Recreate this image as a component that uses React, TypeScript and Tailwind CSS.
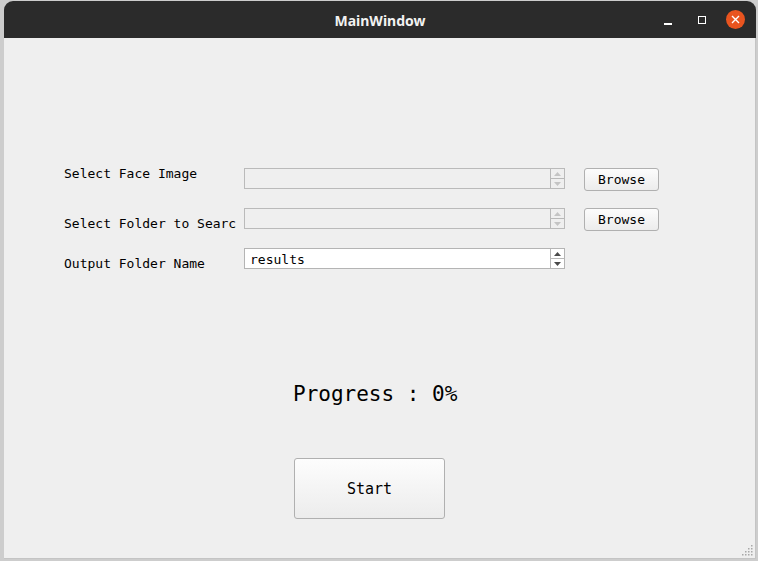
import React from 'react';

const mono = { fontFamily: '"DejaVu Sans Mono", "Liberation Mono", monospace' };

function SpinArrows({ disabled }: { disabled?: boolean }) {
  const fill = disabled ? '#c4c4c4' : '#4a4a4a';
  return (
    <div className="flex flex-col w-[14px] h-full border-l border-[#b8b8b8]">
      <div className="flex-1 flex items-center justify-center border-b border-[#b8b8b8]">
        <svg width="7" height="4" viewBox="0 0 7 4">
          <path d="M0 4 L3.5 0 L7 4 Z" fill={fill} />
        </svg>
      </div>
      <div className="flex-1 flex items-center justify-center">
        <svg width="7" height="4" viewBox="0 0 7 4">
          <path d="M0 0 L3.5 4 L7 0 Z" fill={fill} />
        </svg>
      </div>
    </div>
  );
}

function Field({ value, disabled }: { value?: string; disabled?: boolean }) {
  return (
    <div
      className={`flex w-[321px] h-[21px] border ${
        disabled ? 'bg-[#efefef] border-[#bababa]' : 'bg-white border-[#b4b4b4]'
      }`}
    >
      <div className="flex-1 pl-[5px] pt-[1px] text-[13px] leading-[19px] text-black" style={mono}>
        {value}
      </div>
      <SpinArrows disabled={disabled} />
    </div>
  );
}

function BrowseButton() {
  return (
    <button
      className="block w-[75px] h-[23px] rounded-[3px] border border-[#b0b0b0] bg-gradient-to-b from-[#fcfcfc] to-[#ececec] text-[13px] leading-[21px] text-black"
      style={mono}
    >
      Browse
    </button>
  );
}

export default function App() {
  const rows = [
    { label: 'Select Face Image', labelTop: 'mt-[-2px]', disabled: true, browse: true, value: '' },
    { label: 'Select Folder to Searc', labelTop: 'mt-[8px]', disabled: true, browse: true, value: '' },
    { label: 'Output Folder Name', labelTop: 'mt-[8px]', disabled: false, browse: false, value: 'results' },
  ];

  return (
    <div className="w-[758px] h-[561px] bg-[#cdcdcd] pt-[1px] pl-[4px] overflow-hidden">
      <div className="w-[752px] h-[558px] flex flex-col rounded-t-[9px] overflow-hidden">
        {/* title bar */}
        <div className="relative h-[37px] bg-[#2b2b2b] flex items-center justify-center shrink-0">
          <span
            className="text-[14px] font-bold text-[#f2f2f2] mt-[1px]"
            style={{ fontFamily: '"Noto Sans", "DejaVu Sans", sans-serif' }}
          >
            MainWindow
          </span>
          <div className="absolute right-[11px] top-[9px] flex items-center">
            <div className="w-[8px] h-[10px] flex items-end">
              <div className="w-[8px] h-[1.5px] bg-white" />
            </div>
            <div className="ml-[26px] w-[8px] h-[8px] border border-white" />
            <div className="ml-[20px] w-[19px] h-[19px] rounded-full bg-[#e9541f] flex items-center justify-center">
              <svg width="9" height="9" viewBox="0 0 9 9">
                <path d="M1 1 L8 8 M8 1 L1 8" stroke="white" strokeWidth="1.4" />
              </svg>
            </div>
          </div>
        </div>

        {/* content */}
        <div className="relative flex-1 bg-[#efefef] pt-[130px] pl-[60px] border-r border-b border-[#c4c4c4]">
          <div className="flex flex-col">
            {rows.map(r => (
              <div key={r.label} className="flex items-start h-[40px]">
                <div
                  className={`w-[180px] text-[13px] leading-[15px] text-black whitespace-nowrap ${r.labelTop}`}
                  style={mono}
                >
                  {r.label}
                </div>
                <Field value={r.value} disabled={r.disabled} />
                {r.browse && (
                  <div className="ml-[19px]">
                    <BrowseButton />
                  </div>
                )}
              </div>
            ))}
          </div>

          <div
            className="ml-[229px] mt-[94px] h-[25px] text-[21px] leading-[25px] text-black whitespace-nowrap"
            style={mono}
          >
            Progress : 0%
          </div>

          <button
            className="block ml-[230px] mt-[51px] w-[151px] h-[61px] rounded-[3px] border border-[#b0b0b0] bg-gradient-to-b from-[#fdfdfd] to-[#ececec] text-[15px] leading-[59px] pt-[1px] text-black"
            style={mono}
          >
            Start
          </button>

          {/* resize grip */}
          <svg className="absolute right-[2px] bottom-[2px]" width="11" height="11" viewBox="0 0 11 11">
            {[
              [9, 1], [6, 4], [9, 4], [3, 7], [6, 7], [9, 7], [0, 10], [3, 10], [6, 10], [9, 10],
            ].map(([x, y], i) => (
              <rect key={i} x={x} y={y - 1} width="1.5" height="1.5" fill="#a8a8a8" />
            ))}
          </svg>
        </div>
      </div>
    </div>
  );
}
